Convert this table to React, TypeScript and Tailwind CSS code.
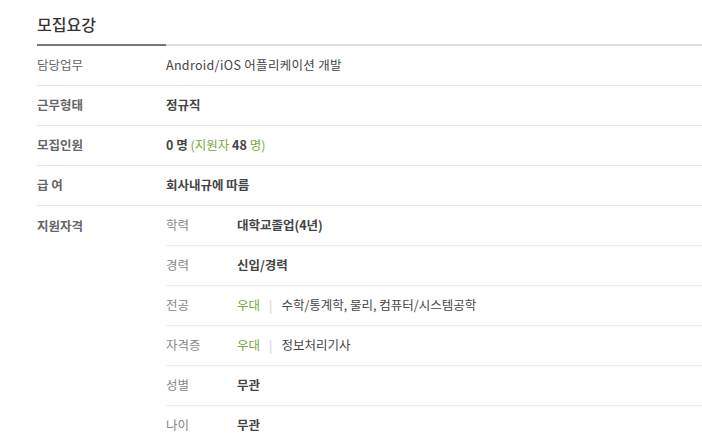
const FONT = "font-['Noto_Sans_CJK_KR','Noto_Sans',sans-serif]";

const QUALS: { label: string; value: React.ReactNode }[] = [
  { label: "학력", value: <b className="font-bold text-[#444]">대학교졸업(4년)</b> },
  { label: "경력", value: <b className="font-bold text-[#444]">신입/경력</b> },
  {
    label: "전공",
    value: (
      <span className="text-[#444]">
        <span className="text-[#7aa83a]">우대</span>
        <span className="mx-[9px] text-[#ccc]">|</span>
        수학/통계학, 물리, 컴퓨터/시스템공학
      </span>
    ),
  },
  {
    label: "자격증",
    value: (
      <span className="text-[#444]">
        <span className="text-[#7aa83a]">우대</span>
        <span className="mx-[9px] text-[#ccc]">|</span>
        정보처리기사
      </span>
    ),
  },
  { label: "성별", value: <b className="font-bold text-[#444]">무관</b> },
  { label: "나이", value: <b className="font-bold text-[#444]">무관</b> },
];

function Row({ label, bold, children }: { label: string; bold?: boolean; children: React.ReactNode }) {
  return (
    <div className="flex h-10 items-center border-b border-[#e2e2e2]">
      <div className={`w-[129px] shrink-0 text-[#666] ${bold ? "font-bold" : ""}`}>{label}</div>
      <div className="flex-1">{children}</div>
    </div>
  );
}

export default function App() {
  return (
    <div className={`min-h-screen bg-white pl-[37px] text-[12.5px] ${FONT}`}>
      <h2 className="pt-[12px] pb-[8px] text-[16px] leading-[24px] font-medium text-[#333]">모집요강</h2>
      <div className="flex h-[2px]">
        <div className="w-[129px] bg-[#777]" />
        <div className="flex-1 bg-[#ddd]" />
      </div>

      <Row label="담당업무">
        <span className="text-[#444] tracking-[0.3px]">Android/iOS 어플리케이션 개발</span>
      </Row>
      <Row label="근무형태" bold>
        <b className="font-bold text-[#444]">정규직</b>
      </Row>
      <Row label="모집인원" bold>
        <span className="text-[#444]">
          <b className="font-bold">0 명</b>{" "}
          <span className="text-[#7aa83a]">
            (지원자 <b className="font-bold text-[#444]">48</b> 명)
          </span>
        </span>
      </Row>
      <Row label="급 여" bold>
        <b className="font-bold text-[#444]">회사내규에 따름</b>
      </Row>

      <div className="flex">
        <div className="w-[129px] shrink-0 pt-[11px] font-bold text-[#666]">지원자격</div>
        <div className="flex-1">
          {QUALS.map((q) => (
            <div key={q.label} className="flex h-10 items-center border-b border-[#ebebeb]">
              <div className="w-[71px] shrink-0 text-[#888]">{q.label}</div>
              <div>{q.value}</div>
            </div>
          ))}
        </div>
      </div>
    </div>
  );
}
